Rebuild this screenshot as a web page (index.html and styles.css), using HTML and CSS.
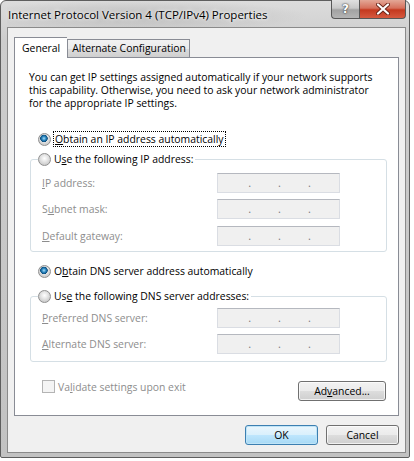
FILE: index.html
```html
<!DOCTYPE html>
<html lang="en">
<head>
  <meta charset="UTF-8" />
  <title>Internet Protocol Version 4 (TCP/IPv4) Properties</title>
  <link rel="stylesheet" href="styles.css">
</head>
<body>
  <div class="window">
    <!-- title bar -->
    <div class="titlebar">
      <span class="title">Internet Protocol Version 4 (TCP/IPv4) Properties</span>
      <div class="caption-buttons">
        <div class="cap help">?</div>
        <div class="cap close">
          <svg width="14" height="12" viewBox="0 0 14 12">
            <path d="M2 1.5 L12 10.5 M12 1.5 L2 10.5" stroke="#6a2418" stroke-width="4" stroke-linecap="round"/>
            <path d="M2 1.5 L12 10.5 M12 1.5 L2 10.5" stroke="#fff" stroke-width="2.2" stroke-linecap="round"/>
          </svg>
        </div>
      </div>
    </div>

    <div class="client">
      <div class="tabs">
        <div class="tab active">General</div>
        <div class="tab">Alternate Configuration</div>
      </div>

      <div class="panel">
        <p class="intro">You can get IP settings assigned automatically if your network supports<br>this capability. Otherwise, you need to ask your network administrator<br>for the appropriate IP settings.</p>

        <div class="radio-row first">
          <span class="radio checked"></span>
          <span class="focus"><u>O</u>btain an IP address automatically</span>
        </div>

        <fieldset class="group ip-group">
          <legend><span class="radio"></span><span>U<u>s</u>e the following IP address:</span></legend>
          <div class="field"><span class="label"><u>I</u>P address:</span><span class="ipbox"><i>.</i><i>.</i><i>.</i></span></div>
          <div class="field"><span class="label">S<u>u</u>bnet mask:</span><span class="ipbox"><i>.</i><i>.</i><i>.</i></span></div>
          <div class="field"><span class="label"><u>D</u>efault gateway:</span><span class="ipbox"><i>.</i><i>.</i><i>.</i></span></div>
        </fieldset>

        <div class="radio-row dns">
          <span class="radio checked"></span>
          <span>O<u>b</u>tain DNS server address automatically</span>
        </div>

        <fieldset class="group dns-group">
          <legend><span class="radio"></span><span>Us<u>e</u> the following DNS server addresses:</span></legend>
          <div class="field"><span class="label"><u>P</u>referred DNS server:</span><span class="ipbox"><i>.</i><i>.</i><i>.</i></span></div>
          <div class="field"><span class="label"><u>A</u>lternate DNS server:</span><span class="ipbox"><i>.</i><i>.</i><i>.</i></span></div>
        </fieldset>

        <div class="panel-footer">
          <label class="check"><span class="checkbox"></span>Va<u>l</u>idate settings upon exit</label>
          <div class="button advanced">Ad<u>v</u>anced...</div>
        </div>
      </div>

      <div class="dialog-buttons">
        <div class="button default">OK</div>
        <div class="button">Cancel</div>
      </div>
    </div>
  </div>
</body>
</html>
```

FILE: styles.css
```css
body {
  margin: 0;
  background: #fff;
  font-family: "Open Sans", "Liberation Sans", sans-serif;
  font-size: 10.4px;
  color: #000;
}
u {
  text-decoration: underline;
  text-underline-offset: 1px;
}

/* window frame */
.window {
  width: 410px;
  height: 458px;
  box-sizing: border-box;
  border: 1px solid #5e5e5e;
  border-radius: 6px 6px 2px 2px;
  padding: 0 3px 4px 6px;
  display: flex;
  flex-direction: column;
  background: linear-gradient(180deg, #dcdcdc 0, #cdcdcd 40px, #c2c2c2 100%);
}
.titlebar {
  height: 26px;
  display: flex;
  align-items: flex-start;
  background: radial-gradient(ellipse 170px 16px at 130px 15px, #bdbdbd 0, rgba(190,190,190,0) 100%);
}
.title {
  flex: 1;
  padding: 7px 0 0 1px;
  line-height: 14px;
  font-size: 11.5px;
  color: #000;
  text-shadow: 0 0 6px #fff, 0 0 3px #fff;
}
.caption-buttons {
  display: flex;
  margin-top: -1px;
}
.cap {
  height: 19px;
  box-sizing: border-box;
  border: 1px solid #575757;
  border-top: none;
  display: flex;
  align-items: center;
  justify-content: center;
}
.help {
  width: 28px;
  border-right: none;
  border-radius: 0 0 0 4px;
  background: linear-gradient(180deg, #e0e0e0 0, #c8c8c8 45%, #a2a2a2 55%, #b4b4b4 100%);
  color: #fff;
  font-family: "DejaVu Sans", sans-serif;
  font-weight: bold;
  font-size: 12px;
  text-shadow: 0 0 1px #333, 0 0 2px #333;
}
.close {
  width: 47px;
  border-radius: 0 0 4px 0;
  background: linear-gradient(180deg, #e3a797 0, #d6705c 45%, #c4391f 55%, #d6593f 100%);
}

/* client area */
.client {
  flex: 1;
  background: #f0f0f0;
  border: 1px solid #8a8a8a;
  padding: 9px 6px 7px 6px;
  display: flex;
  flex-direction: column;
}
.tabs {
  display: flex;
  align-items: flex-end;
  height: 20px;
  position: relative;
  z-index: 1;
}
.tab {
  box-sizing: border-box;
  height: 18px;
  line-height: 16px;
  padding: 0 3px 0 4px;
  border: 1px solid #898c95;
  border-bottom: none;
  background: linear-gradient(180deg, #f2f2f2 0, #ebebeb 50%, #dddddd 51%, #cfcfcf 100%);
}
.tab.active {
  height: 21px;
  margin-bottom: -1px;
  padding: 0 7px;
  line-height: 20px;
  background: #fff;
  border-right: none;
}

.panel {
  background: #fff;
  border: 1px solid #898c95;
  padding: 13px 0 14px 14px;
}
.intro {
  margin: 0;
  line-height: 13px;
  white-space: nowrap;
}

.radio-row {
  display: flex;
  align-items: center;
  height: 16px;
  margin-left: 9px;
}
.radio-row.first {
  margin-top: 21px;
}
.radio-row.dns {
  margin-top: 11px;
}
.radio {
  width: 13px;
  height: 13px;
  box-sizing: border-box;
  border-radius: 50%;
  border: 1px solid #8f8f8f;
  background: radial-gradient(circle at 50% 40%, #ffffff 0, #e8e8e8 3px, #cfcfcf 6px);
  margin-right: 3px;
  flex: none;
}
.radio.checked {
  background:
    radial-gradient(circle at 45% 40%, #a8def8 0, #2b86c0 2px, #0b4d7d 3.5px, rgba(11,77,125,0) 4px),
    radial-gradient(circle at 50% 40%, #ffffff 0, #e8e8e8 3px, #cfcfcf 6px);
}
.focus {
  outline: 1px dotted #000;
  outline-offset: 0;
  line-height: 14px;
  padding: 0 1px;
}

.group {
  margin: 4px 11px 0 1px;
  padding: 0 0 5px 11px;
  border: 1px solid #d5dfe5;
  border-radius: 3px;
}
.group legend {
  display: flex;
  align-items: center;
  height: 16px;
  padding: 0 2px 0 0;
  margin-left: -4px;
}
.dns-group {
  margin-top: 9px;
  padding-bottom: 7px;
}
.field {
  display: flex;
  align-items: center;
  height: 20px;
  color: #8d8d8d;
}
.ip-group .field:first-of-type {
  margin-top: 6px;
}
.dns-group .field:first-of-type {
  margin-top: 4px;
}
.field + .field {
  margin-top: 6px;
}
.ip-group .field:last-of-type {
  margin-top: 7px;
}
.field .label {
  width: 175px;
}
.ipbox {
  width: 123px;
  height: 20px;
  box-sizing: border-box;
  border: 1px solid #dadde3;
  border-top-color: #b5b8bf;
  background: #f0f0f0;
  display: flex;
  justify-content: center;
  gap: 27px;
  padding-left: 2px;
}
.ipbox i {
  font-style: normal;
  color: #7a7a7a;
  line-height: 18px;
  font-size: 11px;
}

.panel-footer {
  display: flex;
  justify-content: space-between;
  align-items: flex-start;
  margin: 18px 12px 0 13px;
}
.check {
  display: flex;
  align-items: center;
  height: 13px;
  color: #8d8d8d;
}
.checkbox {
  width: 13px;
  height: 13px;
  box-sizing: border-box;
  border: 1px solid #b4b4b4;
  background: #f4f4f4;
  margin-right: 3px;
}

.button {
  box-sizing: border-box;
  height: 20px;
  line-height: 18px;
  text-align: center;
  border: 1px solid #707070;
  border-radius: 3px;
  background: linear-gradient(180deg, #f2f2f2 0, #ebebeb 50%, #dddddd 51%, #cfcfcf 100%);
  box-shadow: inset 0 0 0 1px rgba(255,255,255,0.7);
}
.advanced {
  width: 88px;
  margin-top: 1px;
}
.dialog-buttons {
  display: flex;
  justify-content: flex-end;
  gap: 8px;
  margin-top: 9px;
}
.dialog-buttons .button {
  width: 73px;
}
.button.default {
  border-color: #3c7fb1;
  background: linear-gradient(180deg, #eaf6fd 0, #d9f0fc 50%, #bee6fd 51%, #a7d9f5 100%);
  box-shadow: inset 0 0 0 1px #bfe4f7;
}
```
